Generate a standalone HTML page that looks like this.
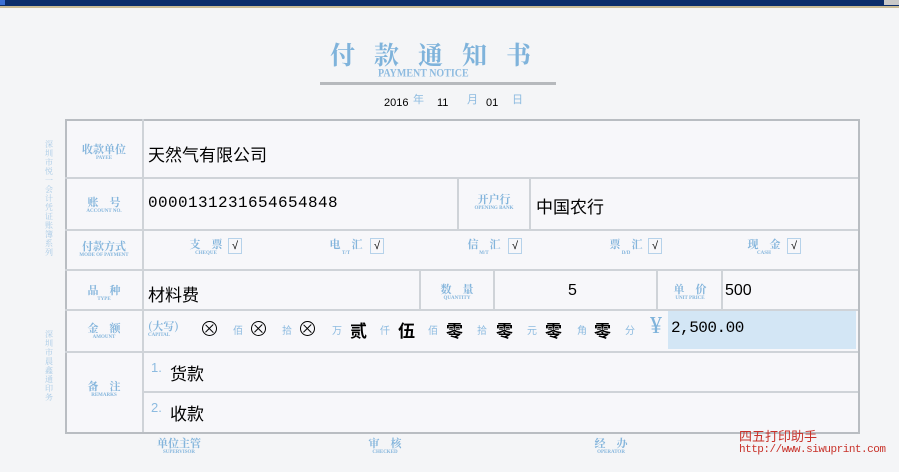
<!DOCTYPE html>
<html><head><meta charset="utf-8"><style>
body{margin:0;width:899px;height:472px;overflow:hidden;background:#f4f5f7;position:relative;font-family:"Liberation Sans","Noto Sans CJK SC",sans-serif}
.a{position:absolute;white-space:nowrap}
.b{color:#8dbbe0}
.k{color:#000}
.h{position:absolute;height:2px;background:#cfd3d8}
.v{position:absolute;width:2px;background:#cfd3d8}
.lbl{position:absolute;color:#84b5dc;text-align:center;font-family:"Noto Serif CJK SC",serif;font-size:11px;line-height:12px;font-weight:bold}
.lbl small{display:block;font-size:5px;font-weight:bold;line-height:8px;font-family:"Liberation Serif",serif}
.cb{position:absolute;width:12px;height:14px;border:1px solid #b6d2ea;font-size:11px;line-height:14px;text-align:center;color:#000}
.sm{font-family:"Noto Serif CJK SC",serif;color:#a8cae6;font-size:9px}
.o{position:absolute;width:15px;height:15px;border:1.3px solid #000;border-radius:50%;box-sizing:border-box}
.o:before,.o:after{content:"";position:absolute;left:1px;top:5.8px;width:10.5px;height:1.2px;background:#000;transform:rotate(45deg)}
.o:after{transform:rotate(-45deg)}
</style></head><body>
<div class="a" style="left:0;top:0;width:899px;height:6px;background:#0b2d6b"></div>
<div class="a" style="left:0;top:6px;width:899px;height:2px;background:#c9bb95"></div>
<div class="a" style="left:0;top:0;width:5px;height:5px;background:#3b6fd4"></div>
<div class="a" style="left:884px;top:0;width:15px;height:5px;background:#c8c8c8"></div>

<div class="a b" style="left:330px;top:36px;font-family:'Noto Serif CJK SC',serif;font-size:25px;font-weight:bold;letter-spacing:19px;color:#7fb3db">付款通知书</div>
<div class="a" style="left:378px;top:68px;font-family:'Liberation Serif',serif;font-size:10px;font-weight:bold;color:#8ebbe0;transform:scaleY(1.2)">PAYMENT NOTICE</div>
<div class="a" style="left:320px;top:82px;width:236px;height:3px;background:#b6b9bd"></div>
<div class="a k" style="left:384px;top:97px;font-size:11px">2016</div>
<div class="a b" style="left:413px;top:91px;font-size:11px">年</div>
<div class="a k" style="left:437px;top:97px;font-size:11px">11</div>
<div class="a b" style="left:467px;top:91px;font-size:11px">月</div>
<div class="a k" style="left:486px;top:97px;font-size:11px">01</div>
<div class="a b" style="left:512px;top:91px;font-size:11px">日</div>

<div class="a sm" style="left:45px;top:140px;width:9px;white-space:normal;line-height:9px;font-size:8px">深圳市悦一会计凭证账簿系列</div>
<div class="a sm" style="left:45px;top:330px;width:9px;white-space:normal;line-height:9px;font-size:8px">深圳市晨鑫通印务</div>

<div class="a" style="left:65px;top:119px;width:791px;height:311px;border:2px solid #b9bdc2;background:rgba(248,249,251,.6)"></div>
<div class="h" style="left:65px;top:177px;width:793px"></div>
<div class="h" style="left:65px;top:229px;width:793px"></div>
<div class="h" style="left:65px;top:269px;width:793px"></div>
<div class="h" style="left:65px;top:309px;width:793px"></div>
<div class="h" style="left:65px;top:351px;width:793px"></div>
<div class="h" style="left:143px;top:391px;width:715px"></div>
<div class="v" style="left:142px;top:119px;height:313px"></div>
<div class="v" style="left:457px;top:178px;height:52px"></div>
<div class="v" style="left:529px;top:178px;height:52px"></div>
<div class="v" style="left:419px;top:270px;height:40px"></div>
<div class="v" style="left:493px;top:270px;height:40px"></div>
<div class="v" style="left:656px;top:270px;height:40px"></div>
<div class="v" style="left:721px;top:270px;height:40px"></div>
<div class="a" style="left:668px;top:311px;width:188px;height:38px;background:#d3e6f5"></div>

<div class="lbl" style="left:68px;top:143px;width:72px">收款单位<small>PAYEE</small></div>
<div class="lbl" style="left:68px;top:196px;width:72px">账　号<small>ACCOUNT NO.</small></div>
<div class="lbl" style="left:68px;top:240px;width:72px">付款方式<small>MODE OF PAYMENT</small></div>
<div class="lbl" style="left:68px;top:284px;width:72px">品　种<small>TYPE</small></div>
<div class="lbl" style="left:68px;top:322px;width:72px">金　额<small>AMOUNT</small></div>
<div class="lbl" style="left:68px;top:380px;width:72px">备　注<small>REMARKS</small></div>
<div class="lbl" style="left:460px;top:193px;width:68px">开户行<small>OPENING BANK</small></div>
<div class="lbl" style="left:422px;top:283px;width:70px">数　量<small>QUANTITY</small></div>
<div class="lbl" style="left:659px;top:283px;width:62px">单　价<small>UNIT PRICE</small></div>

<div class="a k" style="left:148px;top:141px;font-size:17px">天然气有限公司</div>
<div class="a k" style="left:148px;top:194px;font-size:16px;font-family:'Liberation Mono',monospace;letter-spacing:0.4px">0000131231654654848</div>
<div class="a k" style="left:536px;top:193px;font-size:17px">中国农行</div>

<div class="lbl" style="left:186px;top:238px;width:40px">支　票<small>CHEQUE</small></div><div class="cb" style="left:228px;top:238px">√</div>
<div class="lbl" style="left:326px;top:238px;width:40px">电　汇<small>T/T</small></div><div class="cb" style="left:370px;top:238px">√</div>
<div class="lbl" style="left:464px;top:238px;width:40px">信　汇<small>M/T</small></div><div class="cb" style="left:508px;top:238px">√</div>
<div class="lbl" style="left:606px;top:238px;width:40px">票　汇<small>D/D</small></div><div class="cb" style="left:648px;top:238px">√</div>
<div class="lbl" style="left:744px;top:238px;width:40px">现　金<small>CASH</small></div><div class="cb" style="left:787px;top:238px">√</div>

<div class="a k" style="left:148px;top:281px;font-size:17px">材料费</div>
<div class="a k" style="left:568px;top:282px;font-size:16px">5</div>
<div class="a k" style="left:725px;top:282px;font-size:16px">500</div>

<div class="lbl" style="left:148px;top:320px;width:46px;text-align:left">(大写)<small>CAPITAL</small></div>
<div class="o" style="left:202px;top:321px"></div>
<div class="a b" style="left:233px;top:322px;font-size:10px">佰</div>
<div class="o" style="left:251px;top:321px"></div>
<div class="a b" style="left:282px;top:322px;font-size:10px">拾</div>
<div class="o" style="left:300px;top:321px"></div>
<div class="a b" style="left:332px;top:322px;font-size:10px">万</div>
<div class="a k" style="left:350px;top:317px;font-size:17px;font-weight:bold">贰</div>
<div class="a b" style="left:380px;top:322px;font-size:10px">仟</div>
<div class="a k" style="left:398px;top:317px;font-size:17px;font-weight:bold">伍</div>
<div class="a b" style="left:428px;top:322px;font-size:10px">佰</div>
<div class="a k" style="left:446px;top:317px;font-size:17px;font-weight:bold">零</div>
<div class="a b" style="left:477px;top:322px;font-size:10px">拾</div>
<div class="a k" style="left:496px;top:317px;font-size:17px;font-weight:bold">零</div>
<div class="a b" style="left:527px;top:322px;font-size:10px">元</div>
<div class="a k" style="left:545px;top:317px;font-size:17px;font-weight:bold">零</div>
<div class="a b" style="left:577px;top:322px;font-size:10px">角</div>
<div class="a k" style="left:594px;top:317px;font-size:17px;font-weight:bold">零</div>
<div class="a b" style="left:625px;top:322px;font-size:10px">分</div>
<div class="a" style="left:650px;top:313px;font-size:24px;color:#7fb3db;font-family:'Liberation Serif',serif">¥</div>
<div class="a k" style="left:671px;top:319px;font-size:16px;font-family:'Liberation Mono',monospace;letter-spacing:-0.5px">2,500.00</div>

<div class="a b" style="left:151px;top:360px;font-size:13px">1.</div>
<div class="a k" style="left:170px;top:360px;font-size:17px">货款</div>
<div class="a b" style="left:151px;top:400px;font-size:13px">2.</div>
<div class="a k" style="left:170px;top:400px;font-size:17px">收款</div>

<div class="lbl" style="left:148px;top:437px;width:62px">单位主管<small>SUPERVISOR</small></div>
<div class="lbl" style="left:355px;top:437px;width:60px">审　核<small>CHECKED</small></div>
<div class="lbl" style="left:580px;top:437px;width:62px">经　办<small>OPERATOR</small></div>

<div class="a" style="left:739px;top:426px;font-size:13px;color:#c8322a">四五打印助手</div>
<div class="a" style="left:739px;top:444px;font-size:11px;color:#c8322a;font-family:'Liberation Mono',monospace;letter-spacing:-0.5px">http://www.siwuprint.com</div>
</body></html>
